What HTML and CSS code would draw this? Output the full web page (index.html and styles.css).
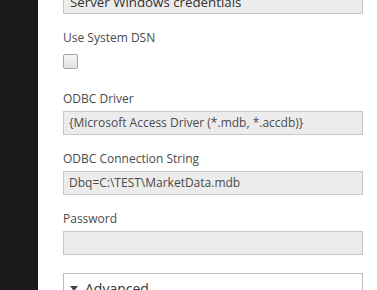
FILE: index.html
```html
<!DOCTYPE html>
<html>
<head>
<meta charset="utf-8">
<link rel="stylesheet" href="styles.css">
</head>
<body>
<div class="page">
  <div class="sidebar"></div>
  <div class="content">
    <div class="select">
      <span class="select-text">Server Windows credentials</span>
      <span class="select-arrow"></span>
    </div>
    <div class="field field-check">
      <div class="label">Use System DSN</div>
      <div class="checkbox"></div>
    </div>
    <div class="field">
      <div class="label">ODBC Driver</div>
      <div class="input">{Microsoft Access Driver (*.mdb, *.accdb)}</div>
    </div>
    <div class="field">
      <div class="label">ODBC Connection String</div>
      <div class="input">Dbq=C:\TEST\MarketData.mdb</div>
    </div>
    <div class="field">
      <div class="label">Password</div>
      <div class="input"></div>
    </div>
    <div class="advanced">
      <span class="adv-arrow"></span>
      <span class="adv-text">Advanced</span>
    </div>
  </div>
</div>
</body>
</html>
```
FILE: styles.css
```css
html, body {
  margin: 0;
  padding: 0;
  background: #ffffff;
  overflow: hidden;
}
.page {
  display: flex;
  align-items: flex-start;
  width: 377px;
  height: 290px;
  overflow: hidden;
  font-family: "Open Sans", "Noto Sans", sans-serif;
  font-size: 12px;
  color: #444444;
}
.sidebar {
  width: 38px;
  height: 290px;
  flex: none;
  background: #1a1a1a;
}
.content {
  flex: none;
  width: 300px;
  margin-left: 25px;
  margin-top: -11px;
  display: flex;
  flex-direction: column;
}
.content > * { flex-shrink: 0; }
.select {
  box-sizing: border-box;
  height: 25px;
  border: 1px solid #c6c6c6;
  background: #ececec;
  display: flex;
  align-items: center;
  padding: 0 6px;
  font-size: 13.3px;
  color: #333;
}
.select-text { flex: 1; white-space: nowrap; }
.select-arrow {
  width: 0;
  height: 0;
  border-left: 3px solid transparent;
  border-right: 3px solid transparent;
  border-top: 4px solid #555;
  margin-right: 5px;
  margin-top: -12px;
}
.field {
  display: flex;
  flex-direction: column;
  margin-top: 16px;
}
.label {
  height: 16px;
  line-height: 16px;
  margin-bottom: 4px;
  color: #4a4a4a;
  white-space: nowrap;
}
.field-check .label { margin-bottom: 8px; }
.checkbox {
  box-sizing: border-box;
  width: 15px;
  height: 15px;
  border: 1px solid #a6a6a6;
  border-radius: 2px;
  background: linear-gradient(#f4f4f4, #e2e2e2);
}
.field-check + .field { margin-top: 22px; }
.input {
  box-sizing: border-box;
  height: 24px;
  border: 1px solid #c8c8c8;
  background: #ececec;
  line-height: 22px;
  padding: 0 5px;
  color: #4a4a4a;
  white-space: nowrap;
}
.advanced {
  box-sizing: border-box;
  margin-top: 18px;
  height: 30px;
  border: 1px solid #bdbdbd;
  background: #fff;
  display: flex;
  align-items: center;
  padding: 0 6px;
  font-size: 14px;
  color: #333;
}
.adv-arrow {
  width: 0;
  height: 0;
  border-left: 4px solid transparent;
  border-right: 4px solid transparent;
  border-top: 5px solid #444;
  margin-right: 7px;
}
```
